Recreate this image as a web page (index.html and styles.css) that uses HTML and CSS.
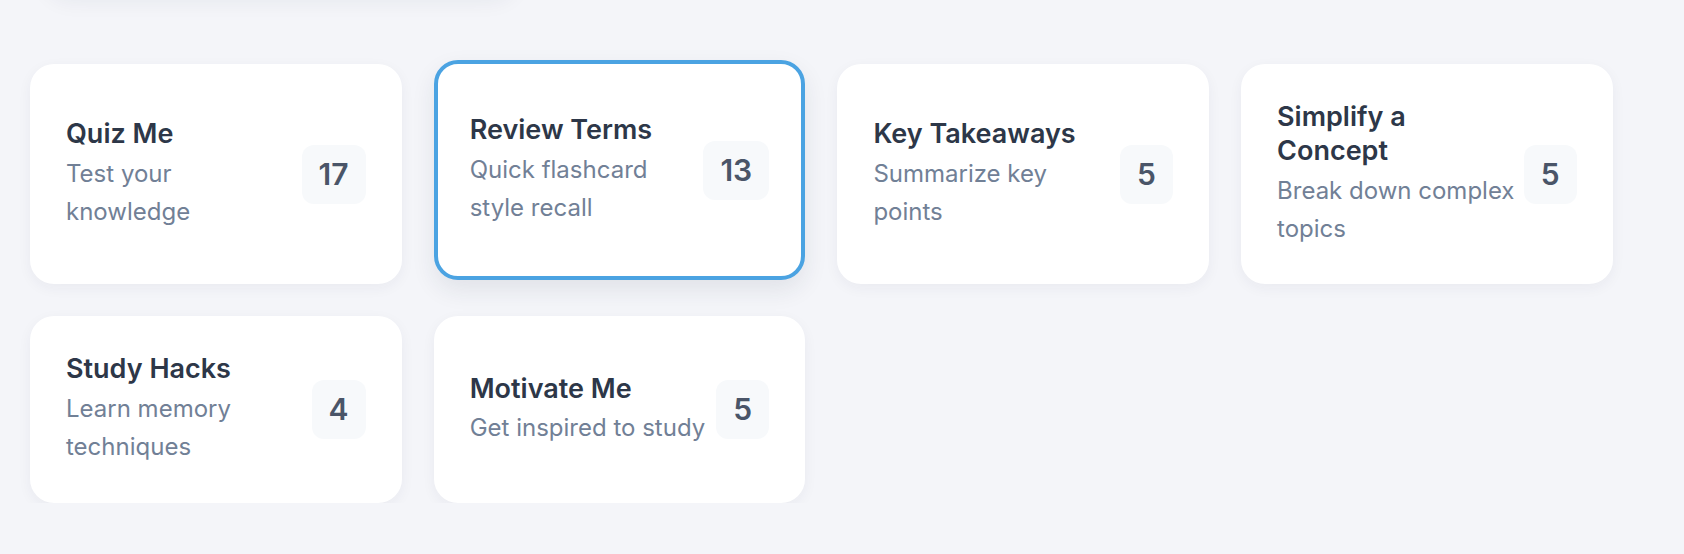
FILE: index.html
```html
<!DOCTYPE html>
<html lang="en">
<head>
<meta charset="utf-8">
<title>Study modes</title>
<link rel="stylesheet" href="styles.css">
</head>
<body>
<main class="page">
  <div class="prev-panel"></div>
  <section class="grid">
    <button class="card">
      <div class="card-text">
        <h3 class="card-title">Quiz Me</h3>
        <p class="card-sub">Test your knowledge</p>
      </div>
      <span class="count">17</span>
    </button>
    <button class="card card-active">
      <div class="card-text">
        <h3 class="card-title">Review Terms</h3>
        <p class="card-sub">Quick flashcard style recall</p>
      </div>
      <span class="count">13</span>
    </button>
    <button class="card">
      <div class="card-text">
        <h3 class="card-title">Key Takeaways</h3>
        <p class="card-sub">Summarize key points</p>
      </div>
      <span class="count">5</span>
    </button>
    <button class="card">
      <div class="card-text">
        <h3 class="card-title">Simplify a Concept</h3>
        <p class="card-sub">Break down complex topics</p>
      </div>
      <span class="count">5</span>
    </button>
    <button class="card">
      <div class="card-text">
        <h3 class="card-title">Study Hacks</h3>
        <p class="card-sub">Learn memory techniques</p>
      </div>
      <span class="count">4</span>
    </button>
    <button class="card">
      <div class="card-text">
        <h3 class="card-title">Motivate Me</h3>
        <p class="card-sub">Get inspired to study</p>
      </div>
      <span class="count">5</span>
    </button>
  </section>
</main>
</body>
</html>
```

FILE: styles.css
```css
* {
  box-sizing: border-box;
}

html, body {
  margin: 0;
  padding: 0;
  background: #f4f5f9;
  overflow: hidden;
}

body {
  font-family: Inter, "Noto Sans", "Liberation Sans", sans-serif;
  -webkit-font-smoothing: antialiased;
}

.page {
  display: flex;
  flex-direction: column;
  align-items: flex-start;
  padding: 0 70px 0 30px;
}

.prev-panel {
  width: 470px;
  height: 60px;
  margin-top: -68px;
  margin-left: 16px;
  background: #ffffff;
  border-radius: 24px;
  box-shadow: 0 8px 22px rgba(30, 40, 70, 0.07);
}

.grid {
  margin-top: 72px;
  display: grid;
  grid-template-columns: repeat(4, 371.5px);
  column-gap: 32.2px;
  row-gap: 32px;
}

.card {
  display: flex;
  align-items: center;
  gap: 8px;
  padding: 32px;
  border: 4px solid transparent;
  border-radius: 24px;
  background: #ffffff;
  box-shadow: 0 4px 14px rgba(30, 40, 70, 0.05);
  text-align: left;
  font: inherit;
  cursor: pointer;
}

.card-active {
  border-color: #4ba3e2;
  transform: translateY(-4px);
  box-shadow: 0 10px 24px rgba(30, 40, 70, 0.09);
}

.card-text {
  flex: 1;
  min-width: 0;
}

.card-title {
  margin: 0;
  font-size: 27px;
  line-height: 33.75px;
  font-weight: 600;
  color: #2d3748;
}

.card-sub {
  margin: 4px 0 0;
  font-size: 24px;
  line-height: 38.4px;
  font-weight: 400;
  color: #718096;
}

.count {
  flex: none;
  padding: 12px 17px;
  border-radius: 12px;
  background: #f7f9fb;
  font-size: 30px;
  line-height: 35px;
  font-weight: 600;
  color: #4a5568;
}
```
